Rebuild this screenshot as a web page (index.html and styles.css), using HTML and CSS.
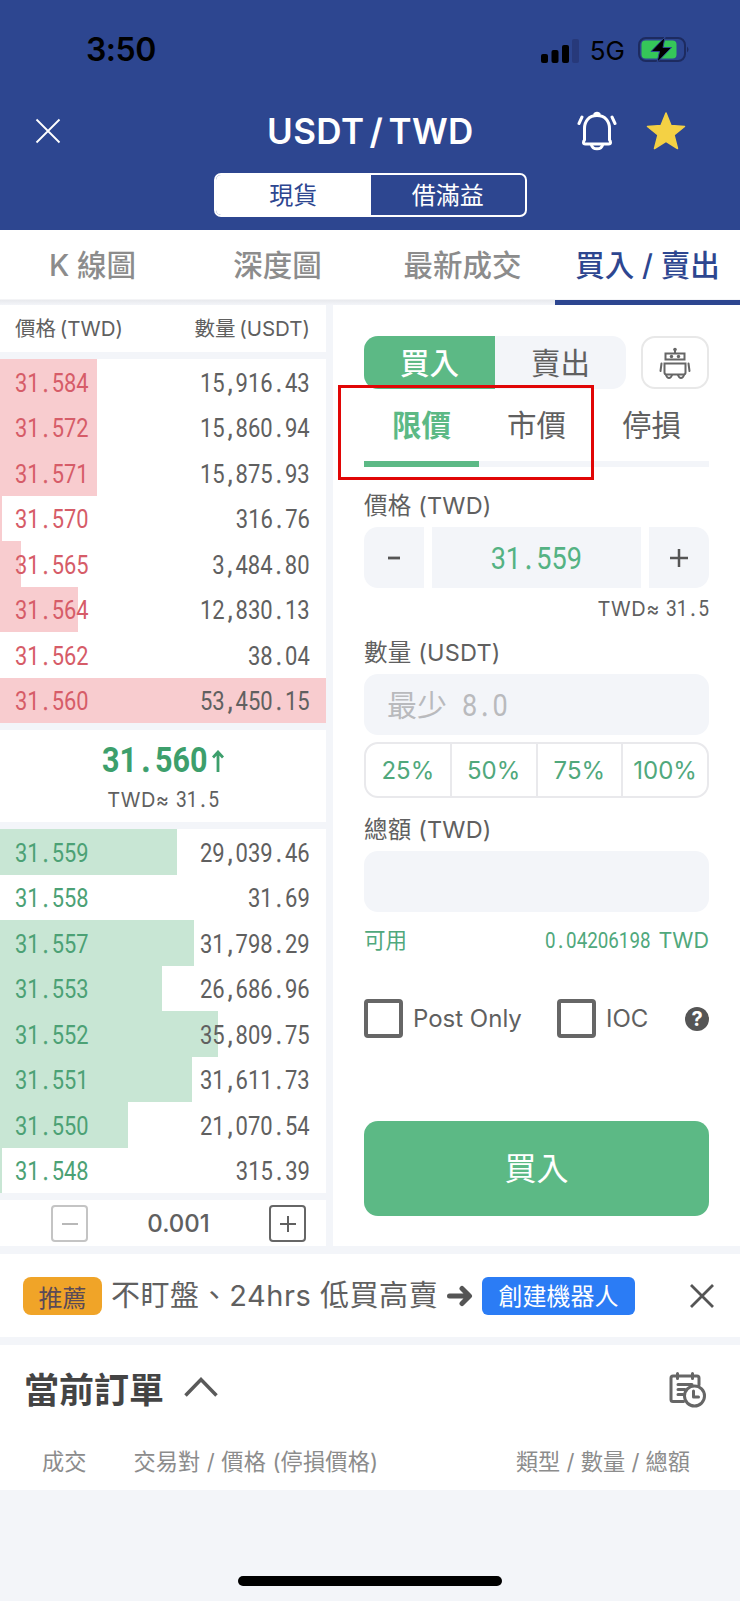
FILE: index.html
```html
<!DOCTYPE html>
<html lang="zh-Hant">
<head>
    <meta charset="UTF-8">
    <meta name="viewport" content="width=device-width, initial-scale=1.0">
    <title>USDT / TWD</title>
    <link rel="stylesheet" href="styles.css">
</head>
<body>
    <header class="header">
        <div class="status">
            <span class="time">3:50</span>
            <div class="status-right">
                <svg class="signal" width="38" height="24" viewBox="0 0 38 24">
                    <rect x="0" y="15" width="7" height="9" rx="2"/>
                    <rect x="10.5" y="11" width="7" height="13" rx="2"/>
                    <rect x="21" y="6" width="7" height="18" rx="2"/>
                    <rect x="31" y="0" width="7" height="24" rx="2" fill="#27397a"/>
                </svg>
                <span class="network">5G</span>
                <svg class="battery" width="52" height="28" viewBox="0 0 52 28">
                    <rect x="1" y="2" width="46" height="23" rx="7" fill="none" stroke="#1d2b60" stroke-width="2"/>
                    <rect x="3.500" y="4.500" width="35" height="18" rx="4" fill="#35c759"/>
                    <path d="M49 10.500q3 3 0 6z" fill="#1d2b60"/>
                    <path d="M27 1L13 15.500h8.500L19 26.500l14.500-15H25z" fill="#000" stroke="#2d4690" stroke-width="1"/>
                </svg>
            </div>
        </div>
        <div class="title-bar">
            <svg class="close" width="26" height="26" viewBox="0 0 26 26"><path d="M1.500 1.500l23 23M24.500 1.500l-23 23" stroke="#fff" stroke-width="1.800"/></svg>
            <h1>USDT / TWD</h1>
            <svg class="bell" width="40" height="40" viewBox="0 0 40 40" fill="none" stroke="#fff" stroke-width="3" stroke-linecap="round" stroke-linejoin="round">
                <path d="M20 4.500c-8 0-12.500 5.500-12.500 13V29q-1 1-1 2.500 0 1.500 2 1.500h23q2 0 2-1.500 0-1.500-1-2.500V17.500c0-7.500-4.500-13-12.500-13z"/>
                <path d="M18 3q2-1.500 4 0M14.500 34c1 5 10 5 11 0M5 6l-3 6.500M35 6l3 6.500"/>
            </svg>
            <svg class="star" width="40" height="38" viewBox="0 0 40 38"><path d="M20 1l5 12.500 13.500 1L28 23l3.500 13.500L20 29.300 8.500 36.500 12 23 1.500 14.500l13.500-1z" fill="#f4d144" stroke="#f4d144" stroke-width="1.500" stroke-linejoin="round"/></svg>
        </div>
        <div class="switch">
            <span class="switch-item active">現貨</span>
            <span class="switch-item">借滿益</span>
        </div>
    </header>

    <nav class="tabs">
        <a class="tab">K 線圖</a>
        <a class="tab">深度圖</a>
        <a class="tab">最新成交</a>
        <a class="tab active">買入 / 賣出</a>
    </nav>

    <main class="trade">
        <section class="book">
            <div class="book-head"><span>價格 (TWD)</span><span>數量 (USDT)</span></div>
            <div class="rows sell">
                <div class="row"><div class="bar" style="width:97px"></div><b class="num">31<i>.</i>584</b><span class="num">15<i>,</i>916<i>.</i>43</span></div>
                <div class="row"><div class="bar" style="width:97px"></div><b class="num">31<i>.</i>572</b><span class="num">15<i>,</i>860<i>.</i>94</span></div>
                <div class="row"><div class="bar" style="width:97px"></div><b class="num">31<i>.</i>571</b><span class="num">15<i>,</i>875<i>.</i>93</span></div>
                <div class="row"><div class="bar" style="width:2px"></div><b class="num">31<i>.</i>570</b><span class="num">316<i>.</i>76</span></div>
                <div class="row"><div class="bar" style="width:21px"></div><b class="num">31<i>.</i>565</b><span class="num">3<i>,</i>484<i>.</i>80</span></div>
                <div class="row"><div class="bar" style="width:78px"></div><b class="num">31<i>.</i>564</b><span class="num">12<i>,</i>830<i>.</i>13</span></div>
                <div class="row"><b class="num">31<i>.</i>562</b><span class="num">38<i>.</i>04</span></div>
                <div class="row"><div class="bar" style="width:326px"></div><b class="num">31<i>.</i>560</b><span class="num">53<i>,</i>450<i>.</i>15</span></div>
            </div>
            <div class="last">
                <div class="last-price"><span class="num">31<i>.</i>560</span><svg width="12" height="22" viewBox="0 0 12 22"><path d="M6 22V2M1 7.500L6 2l5 5.500" fill="none" stroke="#3d9f6c" stroke-width="2.800"/></svg></div>
                <div class="approx">TWD≈ <span class="num">31<i>.</i>5</span></div>
            </div>
            <div class="rows buy">
                <div class="row"><div class="bar" style="width:177px"></div><b class="num">31<i>.</i>559</b><span class="num">29<i>,</i>039<i>.</i>46</span></div>
                <div class="row"><b class="num">31<i>.</i>558</b><span class="num">31<i>.</i>69</span></div>
                <div class="row"><div class="bar" style="width:194px"></div><b class="num">31<i>.</i>557</b><span class="num">31<i>,</i>798<i>.</i>29</span></div>
                <div class="row"><div class="bar" style="width:162px"></div><b class="num">31<i>.</i>553</b><span class="num">26<i>,</i>686<i>.</i>96</span></div>
                <div class="row"><div class="bar" style="width:218px"></div><b class="num">31<i>.</i>552</b><span class="num">35<i>,</i>809<i>.</i>75</span></div>
                <div class="row"><div class="bar" style="width:192px"></div><b class="num">31<i>.</i>551</b><span class="num">31<i>,</i>611<i>.</i>73</span></div>
                <div class="row"><div class="bar" style="width:128px"></div><b class="num">31<i>.</i>550</b><span class="num">21<i>,</i>070<i>.</i>54</span></div>
                <div class="row"><div class="bar" style="width:2px"></div><b class="num">31<i>.</i>548</b><span class="num">315<i>.</i>39</span></div>
            </div>
            <div class="depth">
                <span class="depth-btn off"><svg width="16" height="16" viewBox="0 0 16 16"><path d="M0 8h16" stroke="currentColor" stroke-width="2"/></svg></span>
                <span>0.001</span>
                <span class="depth-btn"><svg width="16" height="16" viewBox="0 0 16 16"><path d="M0 8h16M8 0v16" stroke="currentColor" stroke-width="2"/></svg></span>
            </div>
        </section>

        <section class="order">
            <div class="side">
                <div class="side-switch"><span class="side-item active">買入</span><span class="side-item">賣出</span></div>
                <div class="robot">
                    <svg width="32" height="32" viewBox="0 0 32 32" fill="none" stroke="#666" stroke-width="2" stroke-linecap="round">
                        <path d="M16 2V6M6.500 12.500V6.500h19v6zM5.500 16.500h21v9q0 2-2 2h-17q-2 0-2-2zM2.500 16.500L1.500 24M29.500 16.500l1 7.500"/>
                        <path d="M7 28q1 3 3 3t3-3M19 28q1 3 3 3t3-3"/>
                        <g fill="#666" stroke="none"><circle cx="16" cy="2.500" r="1.800"/><circle cx="12.500" cy="9.500" r="1.700"/><circle cx="19.500" cy="9.500" r="1.700"/></g>
                    </svg>
                </div>
            </div>
            <div class="types">
                <span class="type active">限價</span><span class="type">市價</span><span class="type">停損</span>
                <div class="highlight"></div>
            </div>
            <label class="label price-label">價格 (TWD)</label>
            <div class="stepper">
                <span class="step minus"><svg width="12" height="4" viewBox="0 0 12 4"><path d="M0 2h12" stroke="#555" stroke-width="2.800"/></svg></span>
                <span class="step value"><span class="num">31<i>.</i>559</span></span>
                <span class="step plus"><svg width="18" height="18" viewBox="0 0 18 18"><path d="M0 9h18M9 0v18" stroke="#555" stroke-width="2.500"/></svg></span>
            </div>
            <div class="approx right">TWD≈ <span class="num">31<i>.</i>5</span></div>
            <label class="label amount-label">數量 (USDT)</label>
            <div class="input">最少 <span class="num">8<i>.</i>0</span></div>
            <div class="percents"><span>25%</span><span>50%</span><span>75%</span><span>100%</span></div>
            <label class="label total-label">總額 (TWD)</label>
            <div class="input"></div>
            <div class="available"><span>可用</span><span><span class="num">0<i>.</i>04206198</span> TWD</span></div>
            <div class="options">
                <span class="check"></span><span class="post-only">Post Only</span>
                <span class="check"></span><span>IOC</span>
                <span class="help">?</span>
            </div>
            <div class="submit">買入</div>
        </section>
    </main>

    <section class="banner">
        <span class="tag">推薦</span>
        <span class="banner-text">不盯盤、24hrs 低買高賣</span>
        <svg class="arrow" width="26" height="22" viewBox="0 0 26 22"><path d="M2.500 11h17M15 3.500l7.500 7.500-7.500 7.500" fill="none" stroke="#555" stroke-width="5" stroke-linecap="round" stroke-linejoin="round"/></svg>
        <span class="create">創建機器人</span>
        <svg class="banner-close" width="24" height="24" viewBox="0 0 24 24"><path d="M1 1l22 22M23 1L1 23" stroke="#555" stroke-width="2.800"/></svg>
    </section>

    <section class="orders">
        <div class="orders-title">
            <h2>當前訂單</h2>
            <svg class="chevron" width="34" height="20" viewBox="0 0 34 20"><path d="M1.500 18.500L17 2.500l15.500 16" fill="none" stroke="#5a5a5a" stroke-width="3.500"/></svg>
            <svg class="history" width="37" height="36" viewBox="0 0 37 36" fill="none" stroke="#666" stroke-width="3" stroke-linecap="round" stroke-linejoin="round">
                <path d="M14.500 29.500H4q-2 0-2-2V6q0-2 2-2h24q2 0 2 2v7M8.500 1.500v5M23.500 1.500v5M9 12.500h14M9 17.500h7M9 22.500h5"/>
                <circle cx="25.500" cy="24" r="10"/><path d="M24.500 19v6h5"/>
            </svg>
        </div>
        <div class="orders-head"><span>成交</span><span class="pair">交易對 / 價格 (停損價格)</span><span>類型 / 數量 / 總額</span></div>
    </section>
    <footer class="home"></footer>
</body>
</html>
```
FILE: styles.css
```css
* {
    box-sizing: border-box;
}
body {
    width: 740px;
    height: 1601px;
    margin: 0;
    overflow: hidden;
    background: #f3f5f9;
    color: #606060;
    font-family: Inter, "Noto Sans CJK TC", sans-serif;
    font-size: 24px;
    line-height: 1;
    white-space: nowrap;
}
h1, h2 {
    margin: 0;
}
svg {
    display: block;
    flex: none;
}

/* condensed digits on a fixed pitch */
.num {
    display: inline-block;
    font-family: Roboto, sans-serif;
    font-size: 25px;
    font-weight: 400;
    transform: scaleX(0.873);
    transform-origin: left center;
}
.num i {
    font-style: normal;
    padding: 0 0.149em;
    -webkit-text-stroke: 0.6px currentColor;
}

/* header */
.header {
    height: 230px;
    background: #2d4690;
}
.status {
    display: flex;
    justify-content: space-between;
    height: 100px;
    padding: 0 50px 0 86px;
    align-items: center;
}
.time {
    color: #000;
    font-size: 32px;
    font-weight: 600;
    letter-spacing: -0.5px;
}
.status-right {
    display: flex;
    align-items: center;
}
.network {
    margin: 2px 13px 0 11px;
    color: #000;
    font-size: 26px;
}
.signal {
    margin: 2px 0 0 2px;
}
.title-bar {
    display: flex;
    align-items: center;
    height: 62px;
    padding-left: 35px;
}
.title-bar h1 {
    width: 210px;
    margin-left: 206px;
    color: #fff;
    font-size: 35px;
    font-weight: 600;
    letter-spacing: 0.4px;
    word-spacing: -4px;
}
.bell {
    margin-left: 100px;
}
.star {
    margin-left: 29px;
}
.switch {
    display: flex;
    width: 313px;
    height: 44px;
    margin: 11px 0 0 214px;
    border: 2px solid #fff;
    border-radius: 7px;
    overflow: hidden;
}
.switch-item {
    flex: 1;
    color: #fff;
    text-align: center;
    line-height: 41px;
}
.switch-item.active {
    background: #fff;
    color: #2d4690;
}

/* page tabs */
.tabs {
    display: flex;
    height: 75px;
    background: linear-gradient(#fff 69px, #e8e9ed 70px, #f3f5f9 75px);
}
.tab {
    flex: 1;
    color: #8c8c8c;
    font-size: 29.500px;
    font-weight: 500;
    text-align: center;
    line-height: 70px;
}
.tab.active {
    border-bottom: 5px solid #2d4690;
    color: #2d4690;
}

/* order book */
.trade {
    display: flex;
    gap: 7px;
    height: 941px;
}
.book {
    display: flex;
    flex-direction: column;
    gap: 7px;
    width: 326px;
}
.book-head {
    display: flex;
    justify-content: space-between;
    height: 47px;
    padding: 0 16px 0 15px;
    background: #fff;
    font-size: 20.500px;
    line-height: 47px;
    word-spacing: -2px;
}
.rows {
    background: #fff;
}
.row {
    display: flex;
    position: relative;
    justify-content: space-between;
    align-items: center;
    height: 45.500px;
    padding: 3px 16px 0 15px;
}
.bar {
    position: absolute;
    top: 0;
    left: 0;
    height: 100%;
}
.row .num {
    position: relative;
}
.row span.num {
    font-size: 25.200px;
    transform-origin: right center;
}
.sell .bar {
    background: #f8cccf;
}
.sell b {
    color: #d65c68;
}
.buy .bar {
    background: #c8e6d4;
}
.buy b {
    color: #4ca175;
}
.last {
    height: 92px;
    padding-top: 12px;
    background: #fff;
    text-align: center;
}
.last-price {
    display: flex;
    justify-content: center;
    align-items: center;
    height: 37px;
    color: #3d9f6c;
}
.last-price .num {
    width: 106px;
    font-size: 35px;
    font-weight: 700;
    text-align: left;
}
.last-price svg {
    margin-left: 4px;
}
.approx {
    padding-top: 10px;
    font-size: 20px;
    letter-spacing: 0.5px;
    height: 36px;
}
.approx .num {
    width: 43px;
    font-size: 22px;
    letter-spacing: 0;
}
.depth {
    display: flex;
    justify-content: space-between;
    align-items: center;
    height: 46px;
    padding: 1px 20px 0 51px;
    background: #fff;
    font-weight: 500;
}
.depth-btn {
    display: flex;
    align-items: center;
    justify-content: center;
    width: 37px;
    height: 37px;
    border: 2px solid #666;
    border-radius: 4px;
}
.depth-btn.off {
    border-color: #c4c4c4;
    color: #b8b8b8;
}

/* order form */
.order {
    display: flex;
    flex-direction: column;
    width: 407px;
    padding: 31px 31px 0;
    background: #fff;
}
.side {
    display: flex;
    justify-content: space-between;
    height: 53px;
}
.side-switch {
    display: flex;
    width: 262px;
    border-radius: 14px;
    background: #f3f5f9;
    overflow: hidden;
}
.side-item {
    flex: 1;
    font-size: 29.500px;
    text-align: center;
    line-height: 54px;
}
.side-item.active {
    background: #5cb985;
    color: #fff;
    font-weight: 500;
}
.robot {
    display: flex;
    align-items: center;
    justify-content: center;
    width: 68px;
    border: 2px solid #e8e8e8;
    border-radius: 14px;
}
.types {
    display: flex;
    position: relative;
    height: 78px;
}
.type {
    flex: 1;
    border-bottom: 6px solid #f3f5f9;
    font-size: 29.500px;
    text-align: center;
    line-height: 73px;
}
.type.active {
    border-color: #5cb985;
    color: #5cb985;
    font-weight: 700;
}
.highlight {
    position: absolute;
    top: -4px;
    left: -26px;
    width: 256px;
    height: 95px;
    border: 3px solid #e10606;
}
.label {
    height: 60px;
    padding-top: 27px;
    font-size: 23.500px;
    letter-spacing: 0.2px;
}
.stepper {
    display: flex;
    gap: 8px;
    height: 61px;
}
.step {
    display: flex;
    align-items: center;
    justify-content: center;
    width: 60px;
    background: #f3f5f9;
}
.minus {
    border-radius: 14px 0 0 14px;
}
.plus {
    border-radius: 0 14px 14px 0;
}
.value {
    flex: 1;
    color: #54b283;
}
.value .num {
    margin-top: 2px;
    font-size: 31px;
    transform-origin: center;
}
.right {
    text-align: right;
}
.amount-label {
    height: 50px;
    padding-top: 17px;
}
.input {
    height: 61px;
    padding-left: 23px;
    border-radius: 14px;
    background: #f3f5f9;
    color: #b9babd;
    font-size: 30px;
    line-height: 62px;
}
.input .num {
    margin-left: 7px;
    font-size: 31px;
}
.percents {
    display: flex;
    height: 56px;
    margin-top: 7px;
    border: 2px solid #e9e9ec;
    border-radius: 14px;
    color: #50a87c;
    line-height: 53px;
}
.percents span {
    flex: 1;
    text-align: center;
}
.percents span + span {
    border-left: 2px solid #e9e9ec;
}
.total-label {
    height: 53px;
    padding-top: 20px;
}
.available {
    display: flex;
    justify-content: space-between;
    align-items: center;
    height: 58px;
    color: #50a87c;
    font-size: 21.500px;
}
.available .num {
    width: 107px;
    font-size: 21.500px;
}
.options {
    display: flex;
    align-items: center;
    height: 39px;
    margin-top: 29px;
}
.check {
    width: 39px;
    height: 39px;
    margin-right: 10px;
    border: 4px solid #666;
    border-radius: 4px;
}
.post-only {
    width: 144px;
}
.help {
    width: 24px;
    height: 24px;
    margin-left: auto;
    border-radius: 50%;
    background: #555;
    color: #fff;
    font-size: 20px;
    font-weight: 700;
    text-align: center;
    line-height: 24px;
}
.submit {
    height: 95px;
    margin-top: 83px;
    border-radius: 14px;
    background: #5cb985;
    color: #fff;
    font-size: 32px;
    text-align: center;
    line-height: 95px;
}

/* banner */
.banner {
    display: flex;
    align-items: center;
    height: 83px;
    margin-top: 8px;
    padding: 0 26px 0 23px;
    background: #fff;
}
.tag {
    width: 79px;
    height: 38px;
    border-radius: 8px;
    background: #f0a428;
    color: #5a4a57;
    text-align: center;
    line-height: 43px;
}
.banner-text {
    width: 326px;
    margin-left: 9px;
    font-size: 29px;
    letter-spacing: 0.55px;
}
.arrow {
    margin-left: 10px;
}
.create {
    width: 153px;
    height: 38px;
    margin-left: 9px;
    border-radius: 6px;
    background: #2b7cf5;
    color: #fff;
    text-align: center;
    line-height: 39px;
}
.banner-close {
    margin-left: auto;
}

/* open orders */
.orders {
    height: 145px;
    margin-top: 8px;
    background: #fff;
}
.orders-title {
    display: flex;
    align-items: center;
    gap: 20px;
    height: 90px;
    padding: 0 34px 0 24px;
}
.orders-title h2 {
    padding-top: 1px;
    color: #444;
    font-size: 35px;
}
.chevron {
    margin-top: -6px;
}
.history {
    margin-left: auto;
}
.orders-head {
    display: flex;
    padding: 16px 50px 0 42px;
    color: #8c8c8c;
    font-size: 22.200px;
}
.pair {
    flex: 1;
    margin-left: 47px;
    letter-spacing: 0.15px;
}
.home {
    width: 264px;
    height: 10px;
    margin: 86px auto 0;
    border-radius: 5px;
    background: #000;
}
```
